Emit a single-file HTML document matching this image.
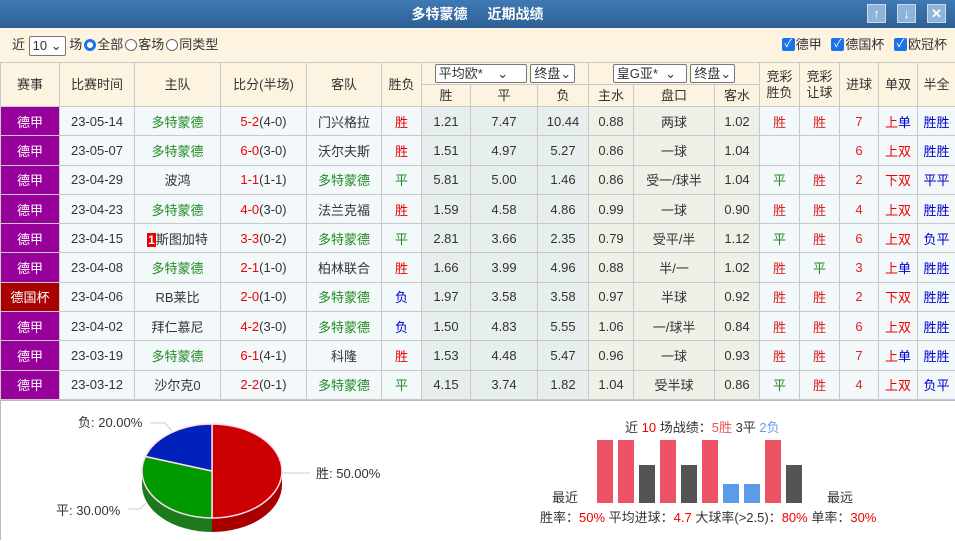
<!DOCTYPE html>
<html><head><meta charset="utf-8"><style>
*{margin:0;padding:0;box-sizing:border-box}
body{width:955px;height:540px;overflow:hidden;background:#fff;font-family:"Liberation Sans","Noto Sans CJK SC",sans-serif;font-size:13px;color:#333;position:relative}
.title{position:absolute;left:0;top:0;width:955px;height:28px;background:linear-gradient(#4079b4,#2d5f95);color:#fff;font-weight:bold;font-size:14px;text-align:center;line-height:28px}
.title span{margin:0 10px}
.btn{position:absolute;top:4px;width:19px;height:19px;background:#8fb3d9;border:1px solid #c9dbee;color:#fff;font-size:13px;line-height:17px;text-align:center;font-weight:bold}
.filter{position:absolute;left:0;top:28px;width:955px;height:34px;background:#fdf3e1;line-height:34px;padding-left:12px}
.sel{display:inline-block;border:1px solid #777;background:#fff;height:20px;line-height:18px;padding:0 3px;font-size:13px;border-radius:2px;vertical-align:middle}
.rad{display:inline-block;width:12px;height:12px;border:1px solid #666;border-radius:50%;vertical-align:middle;margin:0 1px 2px 2px;background:#fff}
.rad.on{border:3px solid #1a73e8;background:#fff}
.cb{display:inline-block;width:13px;height:13px;background:#1a73e8;border-radius:2px;vertical-align:middle;margin:0 1px 2px 6px;color:#fff;font-size:11px;line-height:13px;text-align:center}
table{position:absolute;left:0;top:62px;border-collapse:collapse;table-layout:fixed;width:955px}
td{border:1px solid #c9c9c9;text-align:center;height:29.3px;white-space:nowrap;overflow:hidden;font-size:13px}
tr.h td{background:#fdf3e1;height:22px;line-height:16px}
td.lg{background:#98009b;color:#fff}
td.cup{background:#a90000;color:#fff}
td.o{background:#e7eeee}
td.p{background:#eef1e7}
td.n{background:#f3f8fb}
.g{color:#228b22}.r{color:#e00}.b{color:#00c}.rs{color:#d22}
.hsel{display:inline-block;border:1px solid #777;background:#fff;height:19px;line-height:17px;padding:0 3px;border-radius:2px;font-size:13px;text-align:left}
.bot{position:absolute;left:0;top:400px;width:955px;height:140px;border-top:1px solid #bbb;border-left:1px solid #bbb}
.bar{position:absolute;width:16px}
.t{position:absolute;font-size:13px;color:#333;white-space:nowrap}
</style></head><body>
<div class="title"><span>多特蒙德</span><span>近期战绩</span></div>
<div class="btn" style="left:867px">↑</div><div class="btn" style="left:897px">↓</div><div class="btn" style="left:927px">✕</div>
<div class="filter">近 <span class="sel">10 ⌄</span> 场<span class="rad on"></span>全部<span class="rad"></span>客场<span class="rad"></span>同类型
<span style="position:absolute;right:8px;top:0"><span class="cb">✓</span>德甲 <span class="cb">✓</span>德国杯 <span class="cb">✓</span>欧冠杯</span></div>
<table>
<colgroup><col style="width:59px"><col style="width:75px"><col style="width:86px"><col style="width:86px"><col style="width:75px"><col style="width:40px"><col style="width:49px"><col style="width:67px"><col style="width:51px"><col style="width:45px"><col style="width:81px"><col style="width:45px"><col style="width:40px"><col style="width:40px"><col style="width:39px"><col style="width:39px"><col style="width:38px"></colgroup>
<tr class="h"><td rowspan="2">赛事</td><td rowspan="2">比赛时间</td><td rowspan="2">主队</td><td rowspan="2">比分(半场)</td><td rowspan="2">客队</td><td rowspan="2">胜负</td><td colspan="3"><span class="hsel" style="width:92px">平均欧* &nbsp;&nbsp;&nbsp;⌄</span> <span class="hsel">终盘⌄</span></td><td colspan="3"><span class="hsel" style="width:74px">皇G亚* &nbsp;⌄</span> <span class="hsel">终盘⌄</span></td><td rowspan="2">竞彩<br>胜负</td><td rowspan="2">竞彩<br>让球</td><td rowspan="2">进球</td><td rowspan="2">单双</td><td rowspan="2">半全</td></tr>
<tr class="h"><td>胜</td><td>平</td><td>负</td><td>主水</td><td>盘口</td><td>客水</td></tr>
<tr><td class="lg">德甲</td><td class="n">23-05-14</td><td class="n g">多特蒙德</td><td class="n"><span class="r">5-2</span>(4-0)</td><td class="n">门兴格拉</td><td class="n r">胜</td><td class="o">1.21</td><td class="o">7.47</td><td class="o">10.44</td><td class="p">0.88</td><td class="p">两球</td><td class="p">1.02</td><td class="n rs">胜</td><td class="n rs">胜</td><td class="n rs">7</td><td class="n"><span class="r">上</span><span class="b">单</span></td><td class="n b">胜胜</td></tr>
<tr><td class="lg">德甲</td><td class="n">23-05-07</td><td class="n g">多特蒙德</td><td class="n"><span class="r">6-0</span>(3-0)</td><td class="n">沃尔夫斯</td><td class="n r">胜</td><td class="o">1.51</td><td class="o">4.97</td><td class="o">5.27</td><td class="p">0.86</td><td class="p">一球</td><td class="p">1.04</td><td class="n"></td><td class="n"></td><td class="n rs">6</td><td class="n"><span class="r">上双</span></td><td class="n b">胜胜</td></tr>
<tr><td class="lg">德甲</td><td class="n">23-04-29</td><td class="n">波鸿</td><td class="n"><span class="r">1-1</span>(1-1)</td><td class="n g">多特蒙德</td><td class="n g">平</td><td class="o">5.81</td><td class="o">5.00</td><td class="o">1.46</td><td class="p">0.86</td><td class="p">受一/球半</td><td class="p">1.04</td><td class="n g">平</td><td class="n rs">胜</td><td class="n rs">2</td><td class="n r">下双</td><td class="n b">平平</td></tr>
<tr><td class="lg">德甲</td><td class="n">23-04-23</td><td class="n g">多特蒙德</td><td class="n"><span class="r">4-0</span>(3-0)</td><td class="n">法兰克福</td><td class="n r">胜</td><td class="o">1.59</td><td class="o">4.58</td><td class="o">4.86</td><td class="p">0.99</td><td class="p">一球</td><td class="p">0.90</td><td class="n rs">胜</td><td class="n rs">胜</td><td class="n rs">4</td><td class="n r">上双</td><td class="n b">胜胜</td></tr>
<tr><td class="lg">德甲</td><td class="n">23-04-15</td><td class="n"><span style="background:#e00;color:#fff;font-weight:bold;font-size:12px;padding:0 1px">1</span>斯图加特</td><td class="n"><span class="r">3-3</span>(0-2)</td><td class="n g">多特蒙德</td><td class="n g">平</td><td class="o">2.81</td><td class="o">3.66</td><td class="o">2.35</td><td class="p">0.79</td><td class="p">受平/半</td><td class="p">1.12</td><td class="n g">平</td><td class="n rs">胜</td><td class="n rs">6</td><td class="n r">上双</td><td class="n b">负平</td></tr>
<tr><td class="lg">德甲</td><td class="n">23-04-08</td><td class="n g">多特蒙德</td><td class="n"><span class="r">2-1</span>(1-0)</td><td class="n">柏林联合</td><td class="n r">胜</td><td class="o">1.66</td><td class="o">3.99</td><td class="o">4.96</td><td class="p">0.88</td><td class="p">半/一</td><td class="p">1.02</td><td class="n rs">胜</td><td class="n g">平</td><td class="n rs">3</td><td class="n"><span class="r">上</span><span class="b">单</span></td><td class="n b">胜胜</td></tr>
<tr><td class="cup">德国杯</td><td class="n">23-04-06</td><td class="n">RB莱比</td><td class="n"><span class="r">2-0</span>(1-0)</td><td class="n g">多特蒙德</td><td class="n b">负</td><td class="o">1.97</td><td class="o">3.58</td><td class="o">3.58</td><td class="p">0.97</td><td class="p">半球</td><td class="p">0.92</td><td class="n rs">胜</td><td class="n rs">胜</td><td class="n rs">2</td><td class="n r">下双</td><td class="n b">胜胜</td></tr>
<tr><td class="lg">德甲</td><td class="n">23-04-02</td><td class="n">拜仁慕尼</td><td class="n"><span class="r">4-2</span>(3-0)</td><td class="n g">多特蒙德</td><td class="n b">负</td><td class="o">1.50</td><td class="o">4.83</td><td class="o">5.55</td><td class="p">1.06</td><td class="p">一/球半</td><td class="p">0.84</td><td class="n rs">胜</td><td class="n rs">胜</td><td class="n rs">6</td><td class="n r">上双</td><td class="n b">胜胜</td></tr>
<tr><td class="lg">德甲</td><td class="n">23-03-19</td><td class="n g">多特蒙德</td><td class="n"><span class="r">6-1</span>(4-1)</td><td class="n">科隆</td><td class="n r">胜</td><td class="o">1.53</td><td class="o">4.48</td><td class="o">5.47</td><td class="p">0.96</td><td class="p">一球</td><td class="p">0.93</td><td class="n rs">胜</td><td class="n rs">胜</td><td class="n rs">7</td><td class="n"><span class="r">上</span><span class="b">单</span></td><td class="n b">胜胜</td></tr>
<tr><td class="lg">德甲</td><td class="n">23-03-12</td><td class="n">沙尔克0</td><td class="n"><span class="r">2-2</span>(0-1)</td><td class="n g">多特蒙德</td><td class="n g">平</td><td class="o">4.15</td><td class="o">3.74</td><td class="o">1.82</td><td class="p">1.04</td><td class="p">受半球</td><td class="p">0.86</td><td class="n g">平</td><td class="n rs">胜</td><td class="n rs">4</td><td class="n r">上双</td><td class="n b">负平</td></tr>
</table>
<div class="bot">
<svg width="400" height="140" style="position:absolute;left:-1px;top:0">
<g transform="translate(212,70)">
<path d="M0,47 A70,47 0 0,0 70,0 L70,14 A70,47 0 0,1 0,61 Z" fill="#a80000"/>
<path d="M-70,0 A70,47 0 0,0 0,47 L0,61 A70,47 0 0,1 -70,14 Z" fill="#1c7a1c"/>
<path d="M0,0 L0,-47 A70,47 0 0,1 0,47 Z" fill="#cc0000" stroke="#fde" stroke-width="1.5"/>
<path d="M0,0 L0,47 A70,47 0 0,1 -66.6,-14.5 Z" fill="#009900" stroke="#fde" stroke-width="1.5"/>
<path d="M0,0 L-66.6,-14.5 A70,47 0 0,1 0,-47 Z" fill="#0022bb" stroke="#fde" stroke-width="1.5"/>
</g>
<polyline points="150,22 165,22 172,30" fill="none" stroke="#ccc"/>
<polyline points="282,72 310,72" fill="none" stroke="#ccc"/>
<polyline points="128,108 140,108 146,102" fill="none" stroke="#ccc"/>
<text x="78" y="26" font-size="13" fill="#333" font-family="Liberation Sans,Noto Sans CJK SC,sans-serif">负: 20.00%</text>
<text x="316" y="77" font-size="13" fill="#333" font-family="Liberation Sans,Noto Sans CJK SC,sans-serif">胜: 50.00%</text>
<text x="56" y="114" font-size="13" fill="#333" font-family="Liberation Sans,Noto Sans CJK SC,sans-serif">平: 30.00%</text>
</svg>
<div class="t" style="left:624px;top:16px">近 <span class="r">10</span> 场战绩：<span style="color:#e55">5胜</span> 3平 <span style="color:#6a9be6">2负</span></div>
<div class="bar" style="left:596px;top:39px;height:63px;background:#ec5466"></div>
<div class="bar" style="left:617px;top:39px;height:63px;background:#ec5466"></div>
<div class="bar" style="left:638px;top:64px;height:38px;background:#545454"></div>
<div class="bar" style="left:659px;top:39px;height:63px;background:#ec5466"></div>
<div class="bar" style="left:680px;top:64px;height:38px;background:#545454"></div>
<div class="bar" style="left:701px;top:39px;height:63px;background:#ec5466"></div>
<div class="bar" style="left:722px;top:83px;height:19px;background:#5b9be8"></div>
<div class="bar" style="left:743px;top:83px;height:19px;background:#5b9be8"></div>
<div class="bar" style="left:764px;top:39px;height:63px;background:#ec5466"></div>
<div class="bar" style="left:785px;top:64px;height:38px;background:#545454"></div>
<div class="t" style="left:551px;top:86px">最近</div>
<div class="t" style="left:826px;top:86px">最远</div>
<div class="t" style="left:539px;top:106px">胜率：<span class="r">50%</span> 平均进球：<span class="r">4.7</span> 大球率(&gt;2.5)：<span class="r">80%</span> 单率：<span class="r">30%</span></div>
</div>
</body></html>
